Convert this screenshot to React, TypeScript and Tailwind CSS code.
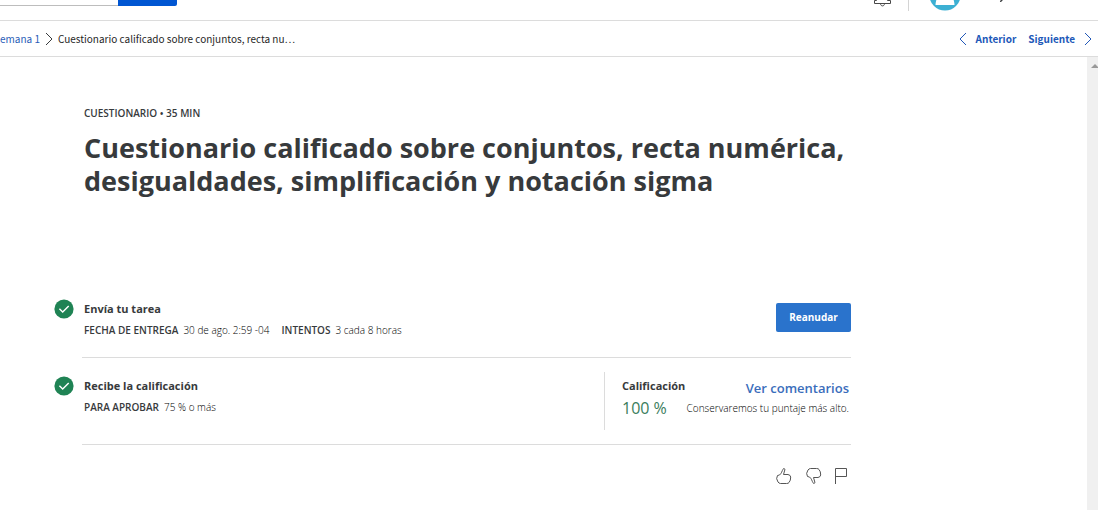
import type { ReactNode } from "react";

function Check() {
  return (
    <svg viewBox="0 0 20 20" className="h-5 w-5" aria-hidden="true">
      <circle cx="10" cy="10" r="9.6" fill="#1f8354" />
      <path d="M5.4 9.8 8.7 13.1 14.7 6.9" fill="none" stroke="#fff" strokeWidth="1.4" />
    </svg>
  );
}

function Chevron({ d, className }: { d: string; className: string }) {
  return (
    <svg viewBox="0 0 8 14" className={className} fill="none" stroke="currentColor" aria-hidden="true">
      <path d={d} />
    </svg>
  );
}

const RIGHT = "M1 1 7 7 1 13";
const LEFT = "M7 1 1 7 7 13";

function Header() {
  return (
    <header className="flex h-[21px] items-end overflow-hidden border-b border-[#dcdcdc]">
      <form className="flex h-9 w-[177px] shrink-0 items-end pb-3.5" onSubmit={(e) => e.preventDefault()}>
        <input aria-label="Buscar" className="h-9 w-[118px] border-b border-[#bdbdbd] outline-none" />
        <button aria-label="Buscar" className="h-9 flex-1 rounded-br-xs bg-[#0056d2]" />
      </form>
      <div className="ml-auto flex h-9 items-end">
        <button aria-label="Notificaciones" className="mr-4 mb-3">
          <svg viewBox="0 0 20 20" className="h-5 w-5" fill="none" stroke="#484848">
            <path d="M4.500 12.500V8a5.500 5.500 0 0 1 11 0v4.500M4.500 12.500H2.500V15.500H18.500V12.500H15.500M8.500 15.500c0 3.200 4 3.200 4 0" />
          </svg>
        </button>
        <div className="mb-[9px] h-7 w-px bg-[#d4d4d4]" />
        <svg viewBox="0 0 32 32" className="mb-[9px] ml-5 h-8 w-8" role="img" aria-label="Perfil">
          <circle cx="16" cy="16" r="15.600" fill="#3cb0d3" />
          <circle cx="16" cy="12" r="6" fill="#fff" />
          <path d="M6.500 26c.5-8 3-9 9.500-9s9 1 9.500 9z" fill="#fff" />
        </svg>
        <svg viewBox="0 0 8 10" className="mr-[92px] mb-[18px] ml-[37px] h-2.5 w-2" fill="none" stroke="#373a3c" strokeWidth="1.400" aria-hidden="true">
          <path d="M1 1 4 7M7 1 4 8Q3.500 9.300 2 9.200" />
        </svg>
      </div>
    </header>
  );
}

function Nav() {
  return (
    <nav className="flex h-9 items-center border-b border-[#dcdcdc] font-['Noto_Sans_CJK_SC','Open_Sans',sans-serif] text-[10px] leading-4">
      <div className="flex min-w-0 items-center">
        <a href="#semana" className="whitespace-nowrap text-[#2a5db8]">emana 1</a>
        <Chevron d={RIGHT} className="mx-[5px] h-3.5 w-2 shrink-0 text-[#373a3c]" />
        <span className="truncate text-[#1f1f1f]">Cuestionario calificado sobre conjuntos, recta nu…</span>
      </div>
      <div className="ml-auto flex shrink-0 items-center pr-1.5 font-bold text-[#2158b8]">
        <a href="#anterior" className="flex items-center gap-[9px]">
          <Chevron d={LEFT} className="h-3.5 w-2" />
          Anterior
        </a>
        <a href="#siguiente" className="ml-3 flex items-center gap-[9px]">
          Siguiente
          <Chevron d={RIGHT} className="h-3.5 w-2" />
        </a>
      </div>
    </nav>
  );
}

function Detail({ label, children }: { label: string; children: ReactNode }) {
  return (
    <div className="flex gap-[5px]">
      <dt className="font-semibold">{label}</dt>
      <dd className="font-light text-black">{children}</dd>
    </div>
  );
}

export default function App() {
  return (
    <div className="flex min-h-screen flex-col bg-white font-['Open_Sans',sans-serif] text-[#373a3c]">
      <Header />
      <Nav />
      <div className="flex grow">
        <main className="min-w-0 grow pt-12 pr-6 pb-6 pl-[54px]">
          <div className="max-w-[797px]">
            <div className="pl-[30px]">
              <p className="text-[10px] leading-4 font-semibold">CUESTIONARIO • 35 MIN</p>
              <h1 className="mt-2.5 text-[27px] leading-[33px] font-bold">
                Cuestionario calificado sobre conjuntos, recta numérica, desigualdades, simplificación y notación sigma
              </h1>
            </div>

            <section className="mt-[102px] flex gap-2">
              <Check />
              <div className="flex grow justify-between border-b border-[#dcdcdc] pb-[19px] pl-0.5">
                <div>
                  <h2 className="text-[11px] leading-5 font-bold">Envía tu tarea</h2>
                  <dl className="mt-[3px] flex gap-3 text-[10px] leading-4">
                    <Detail label="FECHA DE ENTREGA">30 de ago. 2:59 -04</Detail>
                    <Detail label="INTENTOS">3 cada 8 horas</Detail>
                  </dl>
                </div>
                <button className="mt-1 h-[29px] w-[75px] rounded-xs bg-[#2a73cc] text-[10px] font-bold text-white">Reanudar</button>
              </div>
            </section>

            <section className="flex gap-2">
              <div className="pt-[18px]">
                <Check />
              </div>
              <div className="flex grow justify-between border-b border-[#dcdcdc] pt-3.5 pb-3.5 pl-0.5">
                <div className="pt-1">
                  <h2 className="text-[11px] leading-5 font-bold">Recibe la calificación</h2>
                  <dl className="mt-[3px] text-[10px] leading-4">
                    <Detail label="PARA APROBAR">75 % o más</Detail>
                  </dl>
                </div>
                <div className="flex h-[58px] w-[247px] justify-between border-l border-[#dcdcdc] pt-1 pr-0.5 pl-[17px]">
                  <div>
                    <h2 className="text-[11px] leading-5 font-bold">Calificación</h2>
                    <p className="text-base leading-6 text-[#3a7d5c]">100 %</p>
                  </div>
                  <div className="-ml-5 flex flex-col items-end">
                    <a href="#comentarios" className="text-[13px] leading-6 font-semibold text-[#3a6dbb]">Ver comentarios</a>
                    <p className="text-[10px] leading-4 font-light whitespace-nowrap text-black">Conservaremos tu puntaje más alto.</p>
                  </div>
                </div>
              </div>
            </section>

            <div className="mt-[22px] flex justify-end gap-3 pr-[3px]">
              <button aria-label="Me gusta">
                <svg viewBox="0 0 18 18" className="h-[18px] w-[18px]" fill="none" stroke="#555" strokeLinejoin="round">
                  <path d="M3.500 8.500 5.500 8C7.500 6.500 8 4 9 2.200 9.800 1 11.200 1.500 10.800 3L9.500 7.500H14Q16.500 8 16.700 10 16.800 13.500 15 15.500 14.500 16.500 12.500 16.500H6.500Q4.800 16.300 4 15 1.500 11.500 3.500 8.500Z" />
                </svg>
              </button>
              <button aria-label="No me gusta">
                <svg viewBox="0 0 18 18" className="h-[18px] w-[18px]" fill="none" stroke="#555" strokeLinejoin="round">
                  <path d="M3.500 9.500 5.500 10C7.500 11.500 8 14 9 15.800 9.800 17 11.200 16.500 10.800 15L9.500 10.500H14Q16.500 10 16.700 8 16.800 4.500 15 2.500 14.500 1.500 12.500 1.500H6.500Q4.800 1.700 4 3 1.500 6.500 3.500 9.500Z" />
                </svg>
              </button>
              <button aria-label="Marcar">
                <svg viewBox="0 0 14 18" className="h-[18px] w-3.5" fill="none" stroke="#555">
                  <path d="M1.500 17V1.500H12.500V9.500H1.500" />
                </svg>
              </button>
            </div>
          </div>
        </main>
        <div className="flex w-[11px] shrink-0 justify-end bg-[#f0f0f0] pt-[7px]">
          <svg viewBox="0 0 7 4" className="h-1 w-[7px]" aria-hidden="true">
            <path d="M0 4 4 0 7 3V4Z" fill="#999" />
          </svg>
        </div>
      </div>
    </div>
  );
}
